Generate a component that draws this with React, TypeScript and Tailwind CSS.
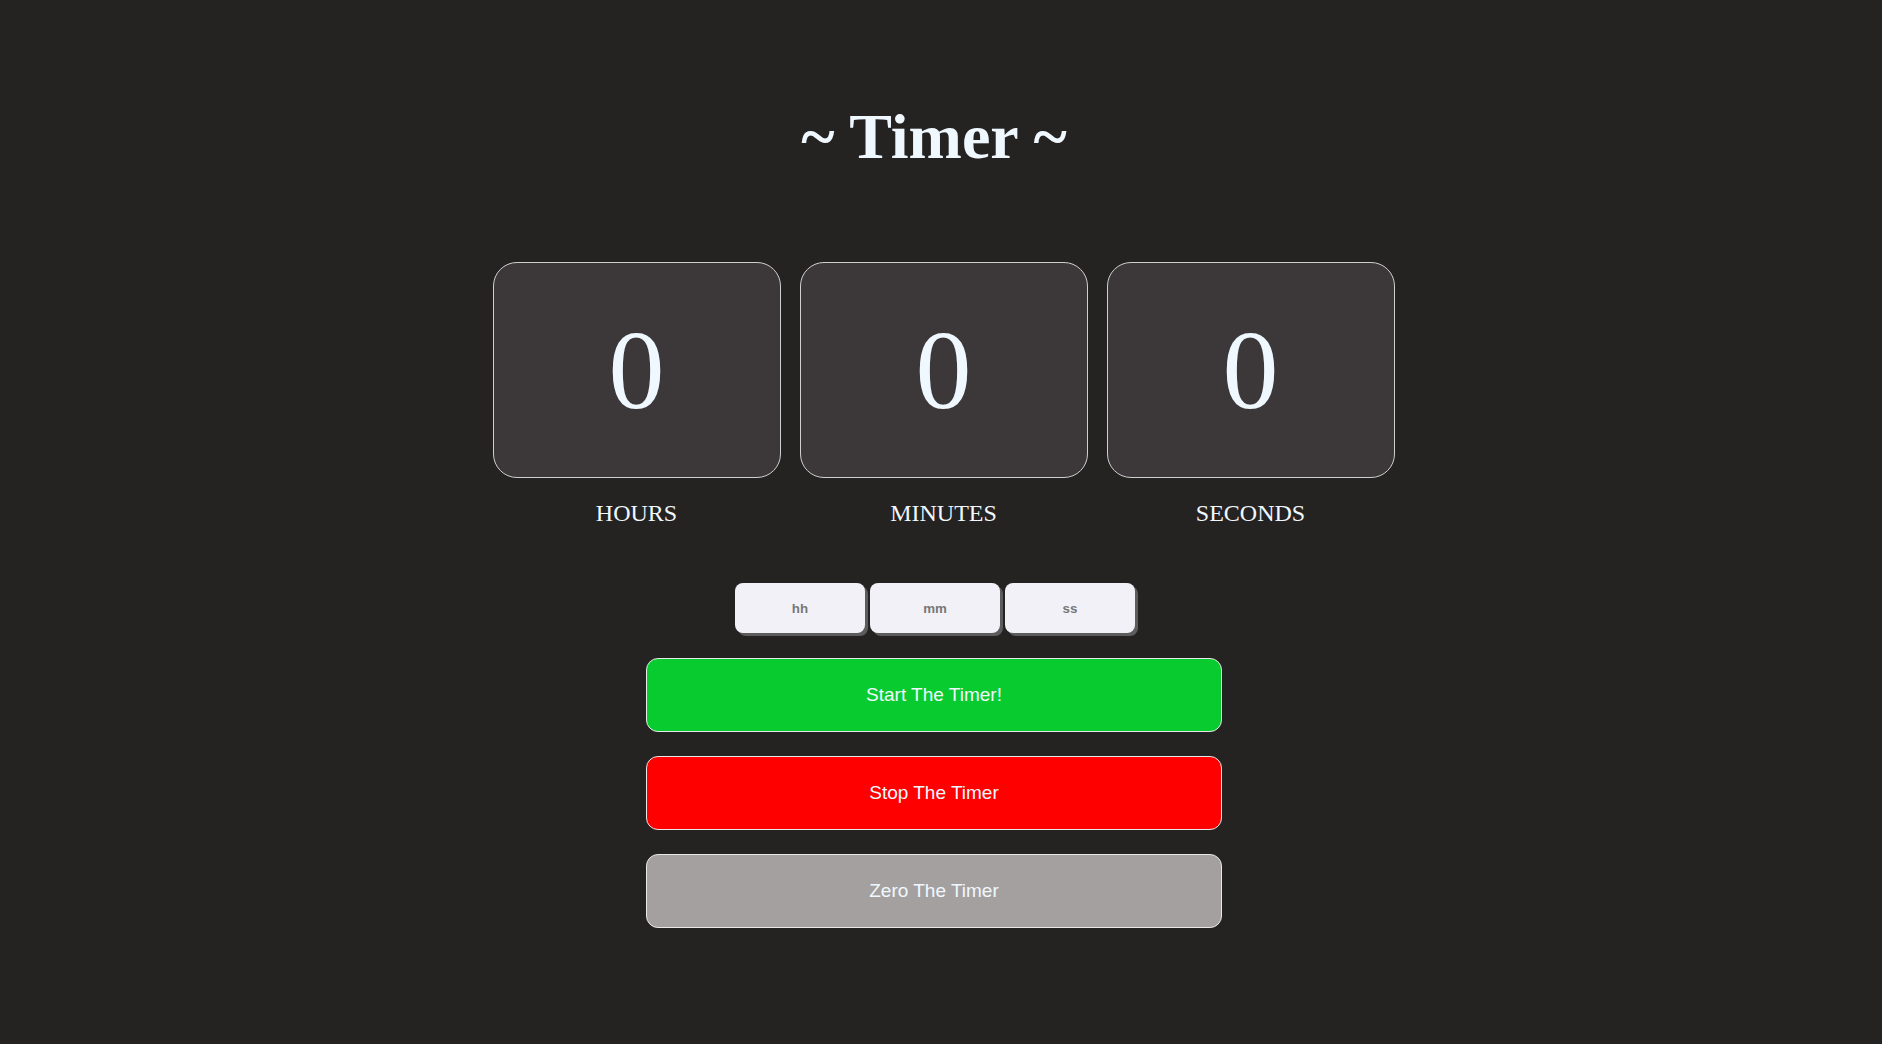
import React from "react";

const serif = "font-['Liberation_Serif','Times_New_Roman',serif]";

function Unit({ label }: { label: string }) {
  return (
    <div className="flex flex-col items-center">
      <div className="flex h-[216px] w-[288px] items-center justify-center rounded-[24px] border border-[#cfcfcf] bg-[#3c3839]">
        <span className={`${serif} text-[112px] leading-none text-[#f0f8ff]`}>0</span>
      </div>
      <div className={`${serif} mt-[21px] text-[24px] leading-[28px] text-[#f0f8ff]`}>{label}</div>
    </div>
  );
}

export default function App() {
  return (
    <div className="min-h-[1044px] w-full bg-[#252222] pr-[14px] font-['Liberation_Sans',Arial,sans-serif]">
      <div className="flex flex-col items-center pt-[101px]">
        <h1 className={`${serif} text-[64px] font-bold leading-[72px] text-[#f0f8ff]`}>~ Timer ~</h1>
        <div className="mt-[89px] flex gap-[19px] pl-[19px]">
          <Unit label="HOURS" />
          <Unit label="MINUTES" />
          <Unit label="SECONDS" />
        </div>
        <div className="mt-[56px] flex gap-[5px] pl-[2px]">
          {["hh", "mm", "ss"].map((p) => (
            <input
              key={p}
              placeholder={p}
              className="h-[50px] w-[130px] rounded-lg border-0 bg-[#f3f1f8] text-center text-[13.33px] font-bold text-[#333] shadow-[3px_3px_0_#5c5c5c] outline-none placeholder:text-[#777]"
            />
          ))}
        </div>
        <div className="mt-[25px] flex flex-col gap-[24px]">
          <button className="h-[74px] w-[576px] rounded-[12px] border border-[#e8e8e8] bg-[#07cb2f] text-[19px] text-[#f0f8ff]">
            Start The Timer!
          </button>
          <button className="h-[74px] w-[576px] rounded-[12px] border border-[#e8e8e8] bg-[#ff0000] text-[19px] text-[#f0f8ff]">
            Stop The Timer
          </button>
          <button className="h-[74px] w-[576px] rounded-[12px] border border-[#e8e8e8] bg-[#a4a09f] text-[19px] text-[#f0f8ff]">
            Zero The Timer
          </button>
        </div>
      </div>
    </div>
  );
}
